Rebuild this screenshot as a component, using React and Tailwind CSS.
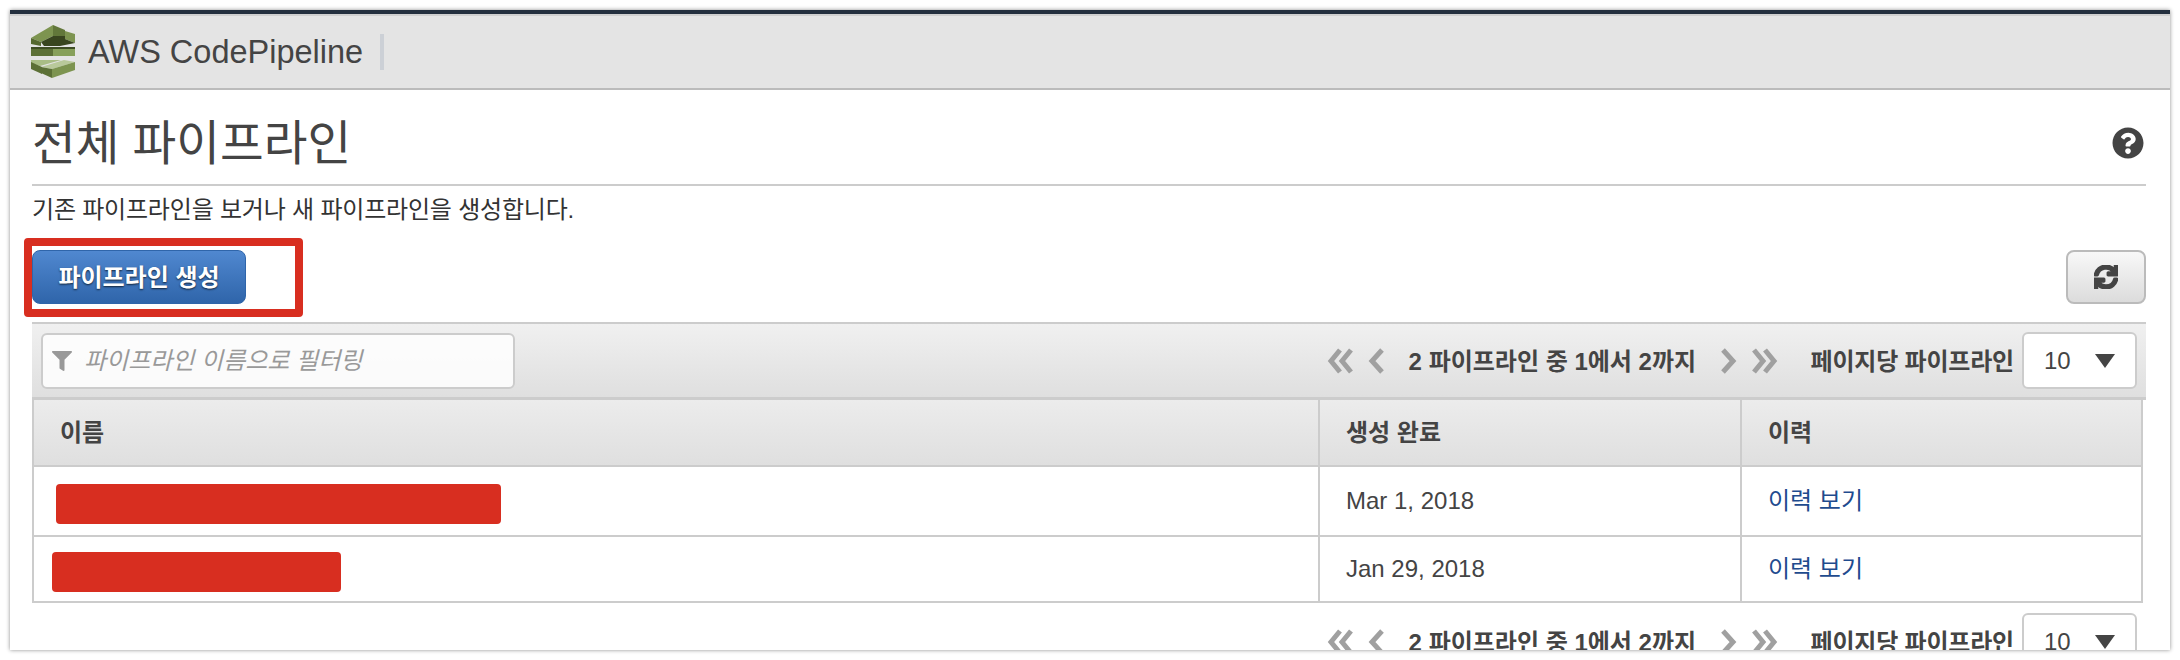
import { FaFilter, FaQuestionCircle, FaSync } from 'react-icons/fa';

const fontStack = "font-['Liberation_Sans','Noto_Sans_CJK_KR',sans-serif]";

const Logo = () => (
  <svg viewBox="0 0 46 54" className="w-[46px] h-[54px] shrink-0">
    <polygon points="1,13 23,0 23,11 11,17" fill="#7d9450" />
    <polygon points="23,0 35,5 35,11 23,11" fill="#62773a" />
    <polygon points="35,6 45,9 45,18 35,14" fill="#7d9450" />
    <polygon points="1,13 11,17 11,21 1,19" fill="#55682f" />
    <polygon points="11,17 23,11 35,11 35,14 45,18 30,21 14,21" fill="#39451f" />
    <polygon points="1,22 45,22 45,24 1,24" fill="#3f4d24" />
    <polygon points="1,24 23,24 23,31 1,31" fill="#5c7036" />
    <polygon points="23,24 45,24 45,31 23,31" fill="#87a05a" />
    <polygon points="1,35 31,35 10,41 1,38" fill="#a9bd85" />
    <polygon points="1,37 12,42 12,49 1,44" fill="#5c7036" />
    <polygon points="11,42 34,35 45,37 22,44" fill="#b9c99b" />
    <polygon points="11,42 22,44 22,53 11,48" fill="#5c7036" />
    <polygon points="22,44 45,37 45,45 22,53" fill="#7d9450" />
  </svg>
);

const DoubleChevron = ({ right }) => (
  <svg viewBox="0 0 26 26" className={`w-[26px] h-[26px] ${right ? 'rotate-180' : ''}`} fill="none" stroke="#a0a0a0" strokeWidth="5">
    <path d="M13 2 4 13l9 11" />
    <path d="M24 2 15 13l9 11" />
  </svg>
);

const Chevron = ({ right }) => (
  <svg viewBox="0 0 18 26" className={`w-[18px] h-[26px] ${right ? 'rotate-180' : ''}`} fill="none" stroke="#a0a0a0" strokeWidth="5">
    <path d="M15 2 5 13l10 11" />
  </svg>
);

const Pager = () => (
  <div className="flex items-center text-2xl font-bold text-[#444]">
    <DoubleChevron />
    <span className="ml-3.5"><Chevron /></span>
    <span className="ml-6 pt-0.5 w-[288px] whitespace-nowrap">2 파이프라인 중 1에서 2까지</span>
    <span className="ml-[23px]"><Chevron right /></span>
    <span className="ml-3.5"><DoubleChevron right /></span>
    <span className="ml-[33px] pt-0.5 whitespace-nowrap tracking-[-0.2px]">페이지당 파이프라인</span>
    <div className="ml-2 w-[115px] h-[57px] shrink-0 flex items-center justify-between pl-5 pr-5 bg-white border-2 border-[#ccc] rounded-md font-normal">
      <span>10</span>
      <svg viewBox="0 0 20 14" className="w-5 h-[14px]"><polygon points="0,0 20,0 10,14" fill="#444" /></svg>
    </div>
  </div>
);

const rows = [
  { width: 'w-[445px]', offset: 'ml-[22px] mt-1.5', height: 'h-[70px]', date: 'Mar 1, 2018' },
  { width: 'w-[289px]', offset: 'ml-[18px] mt-1.5', height: 'h-[66px]', date: 'Jan 29, 2018' },
];

export default function App() {
  return (
    <div className={`${fontStack} w-[2180px] h-[660px] bg-white p-2.5 overflow-hidden`}>
      <div className="w-[2160px] h-[640px] overflow-hidden bg-white shadow-[0_0_4px_rgba(0,0,0,0.45)]">
        <div className="h-1 bg-[#232f3e]" />
        <header className="h-[76px] flex items-center bg-[#e4e4e4] border-t-2 border-b-2 border-t-[#cfcfcf] border-b-[#bbb] pl-5">
          <Logo />
          <span className="ml-3 text-[32.5px] text-[#444] whitespace-nowrap">AWS CodePipeline</span>
          <span className="ml-[17px] w-1 h-9 bg-[#ccd0d6]" />
        </header>

        <div className="pl-[22px] pr-6">
          <div className="h-[96px] flex items-center justify-between border-b-2 border-[#ccc]">
            <h1 className="text-[47.5px] leading-none text-[#444] pb-1 mt-[18px]">전체 파이프라인</h1>
            <FaQuestionCircle className="text-[#444] w-8 h-8 mr-0.5 mt-3" />
          </div>
          <p className="mt-[9px] text-2xl leading-[30px] text-[#333] tracking-[-0.2px]">기존 파이프라인을 보거나 새 파이프라인을 생성합니다.</p>

          <div className="mt-[25px] flex items-center justify-between">
            <div className="relative">
              <button className="w-[214px] h-[54px] rounded-lg pt-0.5 text-2xl font-bold text-white bg-gradient-to-b from-[#5088d0] to-[#2f65aa] border border-[#2f65aa] [text-shadow:0_1px_2px_rgba(0,0,0,0.7)]">
                파이프라인 생성
              </button>
              <div className="absolute left-[-8px] top-[-12px] w-[279px] h-[79px] border-8 border-[#d82e20] rounded-sm" />
            </div>
            <button className="w-20 h-[54px] flex items-center justify-center rounded-lg border-2 border-[#bbb] bg-gradient-to-b from-[#f8f8f8] to-[#dcdcdc]">
              <FaSync className="w-6 h-6 text-[#444] [stroke-width:40]" />
            </button>
          </div>

          <div className="mt-[18px] h-[78px] flex items-center justify-between pl-[9px] pr-[9px] border-t-2 border-b-[3px] border-[#ccc] bg-gradient-to-b from-[#f0f0f0] to-[#dfdfdf]">
            <div className="w-[474px] h-[56px] flex items-center pl-[9px] bg-white/85 border-2 border-[#ccc] rounded-md">
              <FaFilter className="w-5 h-5 text-[#999]" />
              <span className="ml-3 text-2xl italic text-[#999] whitespace-nowrap">파이프라인 이름으로 필터링</span>
            </div>
            <Pager />
          </div>

          <table className="w-[2111px] table-fixed border-collapse text-2xl text-[#444]">
            <thead>
              <tr className="h-[66px] bg-gradient-to-b from-[#ececec] to-[#dfdfdf] font-bold">
                <th className="w-[1286px] border-2 border-t-0 border-[#ccc] pl-[26px] text-left">이름</th>
                <th className="w-[422px] border-2 border-t-0 border-[#ccc] pl-[26px] text-left">생성 완료</th>
                <th className="border-2 border-t-0 border-[#ccc] pl-[26px] text-left">이력</th>
              </tr>
            </thead>
            <tbody>
              {rows.map((row) => (
                <tr key={row.date} className={row.height}>
                  <td className="border-2 border-[#ccc]">
                    <div className={`${row.width} ${row.offset} h-10 rounded-sm bg-[#d82e20]`} />
                  </td>
                  <td className="border-2 border-[#ccc] pl-[26px]">{row.date}</td>
                  <td className="border-2 border-[#ccc] pl-[26px]">
                    <a href="#" className="text-[#1f4b8e]">이력 보기</a>
                  </td>
                </tr>
              ))}
            </tbody>
          </table>

          <div className="mt-2.5 pr-[9px] flex justify-end">
            <Pager />
          </div>
        </div>
      </div>
    </div>
  );
}
